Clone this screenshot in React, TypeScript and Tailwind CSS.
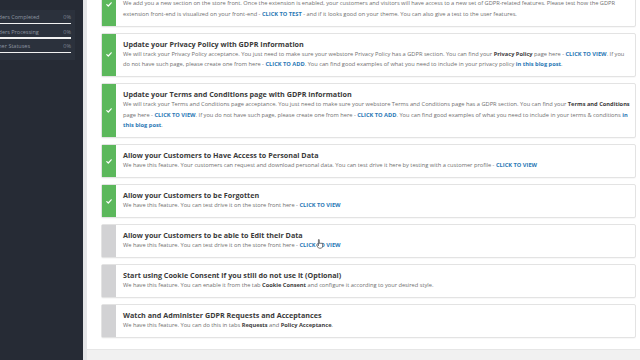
import type { ReactNode } from "react";

type Item = {
  title: string;
  done: boolean;
  body: ReactNode;
  cursor?: boolean;
};

const Link = ({ children }: { children: ReactNode }) => (
  <span className="font-bold text-[#2a78b5]">{children}</span>
);

const B = ({ children }: { children: ReactNode }) => (
  <span className="font-bold text-[#3c3c3c]">{children}</span>
);

const items: Item[] = [
  {
    title: "Test the GDPR Features on your Store Front",
    done: true,
    body: (
      <>
        We add you a new section on the store front. Once the extension is enabled, your customers and visitors will
        have access to a new set of GDPR-related features. Please test how the GDPR extension front-end is visualized
        on your front-end - <Link>CLICK TO TEST</Link> - and if it looks good on your theme. You can also give a test to
        the user features.
      </>
    ),
  },
  {
    title: "Update your Privacy Policy with GDPR Information",
    done: true,
    body: (
      <>
        We will track your Privacy Policy acceptance. You just need to make sure your webstore Privacy Policy has a GDPR
        section. You can find your <B>Privacy Policy</B> page here - <Link>CLICK TO VIEW</Link>. If you do not have such
        page, please create one from here - <Link>CLICK TO ADD</Link>. You can find good examples of what you need to
        include in your privacy policy <Link>in this blog post</Link>.
      </>
    ),
  },
  {
    title: "Update your Terms and Conditions page with GDPR information",
    done: true,
    body: (
      <>
        We will track your Terms and Conditions page acceptance. You just need to make sure your webstore Terms and
        Conditions page has a GDPR section. You can find your <B>Terms and Conditions</B> page here -{" "}
        <Link>CLICK TO VIEW</Link>. If you do not have such page, please create one from here -{" "}
        <Link>CLICK TO ADD</Link>. You can find good examples of what you need to include in your terms &amp; conditions{" "}
        <Link>in this blog post</Link>.
      </>
    ),
  },
  {
    title: "Allow your Customers to Have Access to Personal Data",
    done: true,
    body: (
      <>
        We have this feature. Your customers can request and download personal data. You can test drive it here by
        testing with a customer profile - <Link>CLICK TO VIEW</Link>
      </>
    ),
  },
  {
    title: "Allow your Customers to be Forgotten",
    done: true,
    body: (
      <>
        We have this feature. You can test drive it on the store front here - <Link>CLICK TO VIEW</Link>
      </>
    ),
  },
  {
    title: "Allow your Customers to be able to Edit their Data",
    done: false,
    cursor: true,
    body: (
      <>
        We have this feature. You can test drive it on the store front here - <Link>CLICK TO VIEW</Link>
      </>
    ),
  },
  {
    title: "Start using Cookie Consent if you still do not use it (Optional)",
    done: false,
    body: (
      <>
        We have this feature. You can enable it from the tab <B>Cookie Consent</B> and configure it according to your
        desired style.
      </>
    ),
  },
  {
    title: "Watch and Administer GDPR Requests and Acceptances",
    done: false,
    body: (
      <>
        We have this feature. You can do this in tabs <B>Requests</B> and <B>Policy Acceptance</B>.
      </>
    ),
  },
];

const stats = ["Orders Completed", "Orders Processing", "Other Statuses"];

function Check() {
  return (
    <svg width="6" height="5" viewBox="0 0 6 5" fill="none">
      <path d="M0.8 2.6 L2.3 4 L5.2 0.8" stroke="white" strokeWidth="1.2" strokeLinecap="round" strokeLinejoin="round" />
    </svg>
  );
}

function Pointer() {
  return (
    <svg className="absolute left-[200px] top-[14px]" width="8" height="10" viewBox="0 0 8 10" fill="none">
      <path
        d="M2.4 0.8 C2.4 0.3 3.3 0.3 3.3 0.8 L3.3 4.3 L3.6 4.3 C3.6 3.8 4.4 3.8 4.4 4.3 L4.7 4.3 C4.7 3.9 5.5 3.9 5.5 4.4 L5.8 4.5 C5.8 4.1 6.6 4.1 6.6 4.6 L6.6 7 C6.6 8 6 9.2 5 9.2 L3.3 9.2 C2.6 9.2 2.2 8.8 1.8 8.2 L0.6 6.2 C0.3 5.7 1 5.3 1.4 5.7 L2.4 6.7 Z"
        fill="white"
        stroke="#222"
        strokeWidth="0.6"
        strokeLinejoin="round"
      />
    </svg>
  );
}

export default function App() {
  return (
    <div className="flex h-[360px] w-[640px] overflow-hidden bg-white font-['Open_Sans',sans-serif]">
      <aside className="w-[83px] shrink-0 bg-[#262b35] pt-[10px]">
        <div className="flex w-[75px] flex-col gap-[4.7px] bg-[#2b313c] pb-[7px] pt-[4px]">
          {stats.map((s) => (
            <div key={s} className="overflow-hidden pr-[4px]">
              <div className="flex items-center justify-between text-[5.5px] leading-[7.5px] text-[#8e95a1]">
                <span className="ml-[-8px] whitespace-nowrap">{s}</span>
                <span className="text-[#7d8490]">0%</span>
              </div>
              <div className="mt-[1px] h-[1.5px] bg-[#f2f2f2]" />
            </div>
          ))}
        </div>
      </aside>
      <div className="w-[4px] shrink-0 bg-[#e4e5e7]" />
      <main className="flex min-w-0 flex-1 flex-col">
        <div className="min-h-0 flex-1 overflow-hidden pl-[14px] pr-[4px]">
          <div className="mt-[-18px] flex flex-col gap-[6px]">
            {items.map((it) => (
              <div
                key={it.title}
                className="flex rounded-[2px] border border-[#e3e3e3] bg-white shadow-[0_1px_1px_rgba(0,0,0,0.03)]"
              >
                <div
                  className={`flex w-[14px] shrink-0 items-center justify-center ${
                    it.done ? "bg-[#5cb85c]" : "bg-[#d2d2d4]"
                  }`}
                >
                  {it.done && <Check />}
                </div>
                <div className="relative min-w-0 flex-1 pb-[6.5px] pl-[7px] pr-[4px] pt-[5px]">
                  <p className="text-[7.2px] font-bold leading-[10px] text-[#3a3a3a]">{it.title}</p>
                  <p className="text-[5.7px] leading-[10.5px] text-[#6f6f6f]">{it.body}</p>
                  {it.cursor && <Pointer />}
                </div>
              </div>
            ))}
          </div>
        </div>
        <div className="h-[11px] shrink-0 border-t border-[#e6e6e6] bg-[#f1f1f1]" />
      </main>
    </div>
  );
}
